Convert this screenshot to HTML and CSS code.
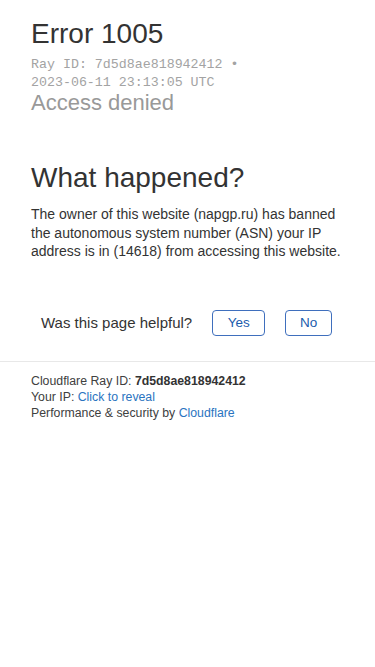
FILE: index.html
```html
<!DOCTYPE html>
<html lang="en">
<head>
    <meta charset="UTF-8">
    <meta name="viewport" content="width=device-width, initial-scale=1.0">
    <title>Access denied | napgp.ru used Cloudflare to restrict access</title>
    <link rel="stylesheet" href="styles.css">
</head>
<body>
    <div class="wrapper">
        <header class="header">
            <h1 class="title">Error 1005</h1>
            <div class="ray-line">Ray ID: 7d5d8ae818942412 &bull;</div>
            <div class="ray-line">2023-06-11 23:13:05 UTC</div>
            <h2 class="subtitle">Access denied</h2>
        </header>

        <section class="what">
            <h2 class="section-title">What happened?</h2>
            <p>The owner of this website (napgp.ru) has banned the autonomous system number (ASN) your IP address is in (14618) from accessing this website.</p>
        </section>

        <div class="feedback">
            <span class="feedback-q">Was this page helpful?</span>
            <button class="fb-btn fb-yes">Yes</button>
            <button class="fb-btn">No</button>
        </div>
    </div>

    <footer class="footer">
        <p>Cloudflare Ray ID: <strong>7d5d8ae818942412</strong></p>
        <p>Your IP: <a href="#">Click to reveal</a></p>
        <p>Performance &amp; security by <a href="#">Cloudflare</a></p>
    </footer>
</body>
</html>
```

FILE: styles.css
```css
body {
    margin: 0;
    font-family: "Liberation Sans", Arial, sans-serif;
    color: #404040;
    background-color: white;
}
.wrapper {
    padding: 0 28px 0 31px;
}
.header {
    padding-top: 18px;
}
.title {
    margin: 0 0 6px;
    font-size: 28px;
    font-weight: normal;
    line-height: 32px;
    color: #333;
}
.ray-line {
    font-family: "Liberation Mono", "Courier New", monospace;
    font-size: 13.3px;
    line-height: 18px;
    color: #a3a3a3;
}
.subtitle {
    margin: 0;
    font-size: 22px;
    font-weight: normal;
    line-height: 22px;
    color: #999;
}
.what {
    padding-top: 48px;
}
.section-title {
    margin: 0 0 11px;
    font-size: 28px;
    font-weight: normal;
    line-height: 32px;
    color: #333;
}
.what p {
    margin: 0;
    font-size: 14px;
    line-height: 18.5px;
    color: #333;
}
.feedback {
    display: flex;
    align-items: center;
    gap: 20px;
    padding: 49px 0 25px 10px;
    font-size: 15px;
}
.feedback-q {
    color: #333;
}
.fb-btn {
    width: 47px;
    height: 26px;
    padding: 0;
    border: 1px solid #3f6fbd;
    border-radius: 4px;
    background: white;
    color: #1b5cad;
    font-family: inherit;
    font-size: 13.5px;
}
.fb-yes {
    width: 53px;
}
.footer {
    border-top: 1px solid #e8e8e8;
    padding: 11px 31px;
    font-size: 12.3px;
    line-height: 16px;
    color: #404040;
}
.footer p {
    margin: 0;
}
.footer strong {
    color: #333;
}
.footer a {
    color: #2a74bf;
    text-decoration: none;
}
```
